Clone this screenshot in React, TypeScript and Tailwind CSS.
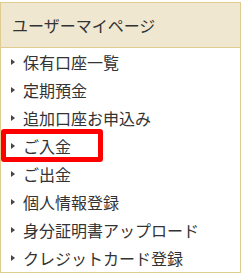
import React from "react";

const items = [
  "保有口座一覧",
  "定期預金",
  "追加口座お申込み",
  "ご入金",
  "ご出金",
  "個人情報登録",
  "身分証明書アップロード",
  "クレジットカード登録",
];

export default function App() {
  return (
    <div className="w-[243px] h-[274px] bg-white pt-[2px]" style={{ fontFamily: '"Noto Sans CJK JP", "Noto Sans", sans-serif' }}>
      <div className="w-[241px] border border-[#e0cc90]">
        <div className="h-[45px] bg-[#f0e7d0] border-b border-[#e0cc90] flex items-center pl-[11px] text-[16px] text-[#333]">
          ユーザーマイページ
        </div>
        <ul>
          {items.map((t, i) => (
            <li key={t} className="relative h-[28px] flex items-center pl-[10px] text-[16px] text-[#333]">
              <span className="w-0 h-0 border-y-[3px] border-y-transparent border-l-[4px] border-l-[#444] mr-[8px]" />
              <span className="leading-none">{t}</span>
              {i === 3 && (
                <span className="absolute left-0 top-[-3px] w-[102px] h-[33px] border-[5px] border-[#ff0000] rounded-[3px]" />
              )}
            </li>
          ))}
        </ul>
      </div>
    </div>
  );
}
